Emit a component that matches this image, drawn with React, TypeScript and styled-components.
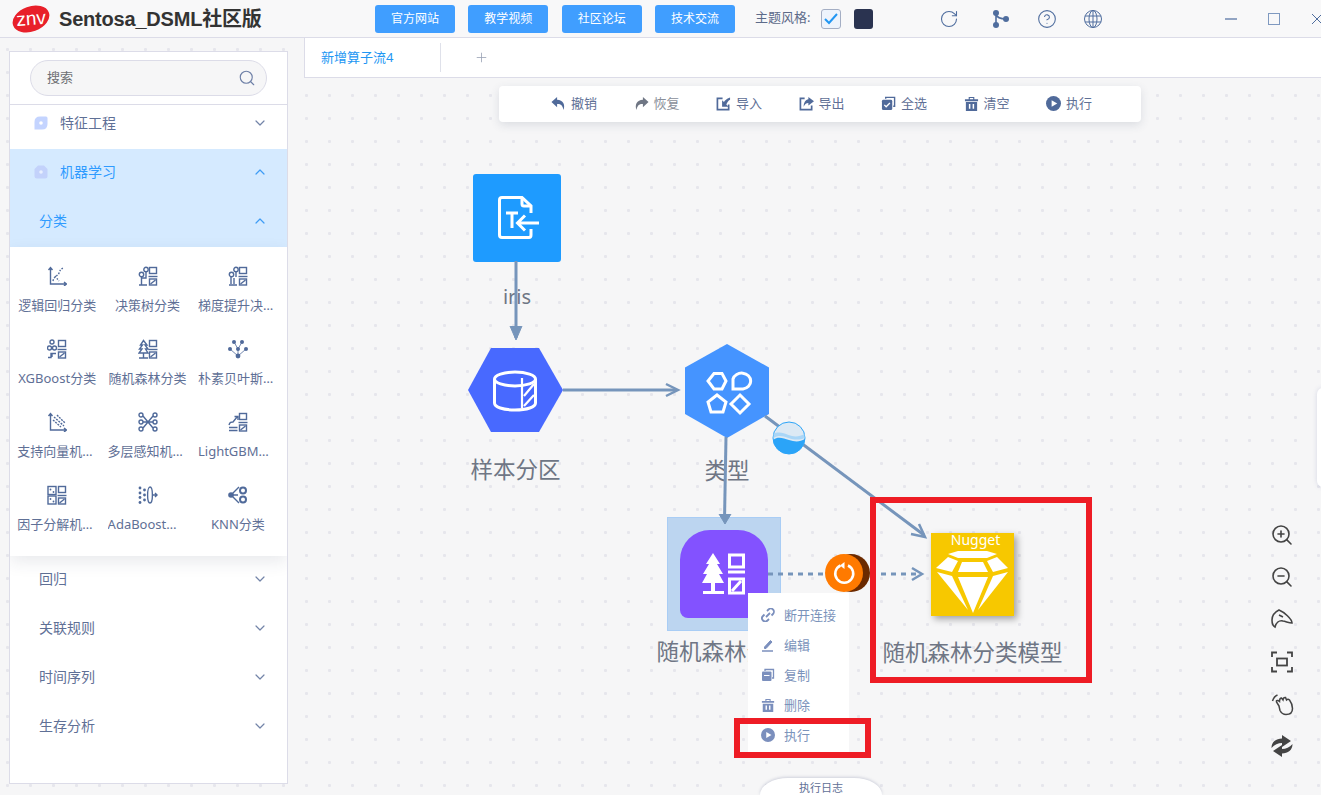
import React from "react";
import styled, { createGlobalStyle } from "styled-components";
import { ChevronDown, ChevronUp, RotateCw, CircleHelp, Search, ZoomIn, ZoomOut, Plus } from "lucide-react";

const Global = createGlobalStyle`
  html, body { margin: 0; padding: 0; height: 100%; overflow: hidden; }
  body { font-family: "Noto Sans", "Noto Sans CJK SC", sans-serif; }
  * { box-sizing: border-box; }
`;

const Page = styled.div`
  width: 1321px; height: 795px; display: flex; flex-direction: column; overflow: hidden; background: #f6f6f7;
`;
const Header = styled.header`
  height: 38px; flex: none; display: flex; align-items: center; background: #f8f8f9; border-bottom: 1px solid #dcdce8; padding-left: 12px; overflow: hidden;
`;
const Logo = styled.svg`width: 38px; height: 30px; flex: none;`;
const Title = styled.div`
  margin-left: 9px; width: 316px; flex: none; font: bold 20px "Liberation Sans", "Noto Sans CJK SC", sans-serif; letter-spacing: -0.2px; color: #333; white-space: nowrap; padding-bottom: 3px;
`;
const LinkGroup = styled.div`display: flex; gap: 13.33px; flex: none;`;
const LinkButton = styled.button`
  width: 80px; height: 28px; border: 0; border-radius: 3px; background: #409eff; color: #fff; font: 12px "Noto Sans CJK SC", sans-serif; padding: 0 0 3px;
`;
const ThemeLabel = styled.span`
  margin-left: 20px; width: 66px; flex: none; font-size: 13px; color: #5d6b8a; white-space: nowrap; padding-bottom: 5px;
`;
const ThemeCheck = styled.div`
  width: 20px; height: 20px; border: 1px solid #a4aec4; border-radius: 3px; background: #edf3fc; display: flex; align-items: center; justify-content: center; flex: none;
`;
const ThemeDark = styled.div`
  width: 19px; height: 20px; margin-left: 13px; border-radius: 3px; background: #2a3350; flex: none;
`;
const HeaderIcons = styled.div`
  margin-left: 66px; display: flex; align-items: center; color: #4f6d9e; flex: none;
  svg:first-child { margin-right: 32px; }
  svg + svg + svg, svg + svg + svg + svg { margin-left: 26px; }
`;
const WindowButtons = styled.div`
  margin-left: 122px; display: flex; align-items: center; gap: 31px; flex: none;
`;
const Body = styled.main`
  flex: 1; min-height: 0; display: flex; position: relative;
  background-image: radial-gradient(circle, #e6e6ec 1.3px, transparent 1.7px);
  background-size: 23px 23px; background-position: -4px 0;
`;
const Sidebar = styled.aside`
  width: 279px; flex: none; margin: 13px 16px 11px 9px; background: #fff; border: 1px solid #dcdce8; display: flex; flex-direction: column; overflow: hidden;
`;
const SearchRow = styled.div`
  height: 53px; flex: none; padding: 8px 20px 0; border-bottom: 1px solid #dcdce8;
`;
const SearchBox = styled.div`
  height: 36px; border-radius: 18px; background: #f6f6f7; border: 1px solid #dcdce8; display: flex; align-items: center; justify-content: space-between; padding: 0 10px 3px 16px; font-size: 13px; color: #6f7074;
  svg { margin-top: 3px; }
`;
const MenuRow = styled.div<{ $active?: boolean; $sub?: boolean; $first?: boolean }>`
  height: ${p => (p.$first ? 44 : 49)}px; flex: none; display: flex; align-items: center;
  padding: 0 19px ${p => (p.$first ? 10 : 5)}px ${p => (p.$sub ? 29 : 24)}px;
  background: ${p => (p.$active ? "#d5eaff" : "#fff")};
  color: ${p => (p.$active ? "#2f9bff" : "#5f7096")};
  font-size: 14px;
  svg.chev { margin-left: auto; margin-top: 2px; color: ${p => (p.$active ? "#3f9cf5" : "#7384a8")}; }
`;
const MenuIcon = styled.svg`width: 14px; height: 14px; margin-right: 12px; margin-top: 2px; flex: none;`;
const AlgoGrid = styled.div`
  flex: none; height: 309px; display: grid; grid-template-columns: repeat(3, 90.4px); grid-auto-rows: 73px; padding-left: 2px; background: #fff;
  box-shadow: 0 6px 16px rgba(40, 50, 80, 0.1); position: relative; z-index: 1;
`;
const AlgoItem = styled.div`
  display: flex; flex-direction: column; align-items: center; padding-top: 19px;
  svg { width: 20px; height: 20px; color: #506a9a; flex: none; }
`;
const AlgoLabel = styled.div`
  margin-top: 10px; width: 80px; height: 18px; line-height: 18px; font-size: 13px; color: #5f7096; text-align: center; white-space: nowrap; overflow: hidden; text-overflow: ellipsis;
`;
const Workspace = styled.section`flex: 1; min-width: 0; display: flex; flex-direction: column;`;
const Tabs = styled.div`
  height: 40px; flex: none; background: #fff; border-left: 1px solid #dcdce8; border-bottom: 1px solid #dcdce8; display: flex; align-items: center;
`;
const Tab = styled.div`
  width: 136px; height: 29px; margin-top: -1px; padding: 0 0 2px 16px; border-right: 1px solid #dfe1ea; display: flex; align-items: center; font-size: 13px; color: #2196f3;
`;
const AddTab = styled.div`margin-left: 33px; display: flex; color: #9aa3b5;`;
const Canvas = styled.div`flex: 1; min-height: 0; position: relative;`;
const Toolbar = styled.div`
  position: absolute; left: 195px; top: 8px; width: 642px; height: 36px; background: #fff; border-radius: 4px; box-shadow: 0 3px 10px rgba(60, 70, 100, 0.14); display: flex; align-items: center; padding: 0 0 2px 52px; gap: 36.5px; z-index: 3;
`;
const ToolItem = styled.div<{ $muted?: boolean }>`
  display: flex; align-items: center; gap: 5px; font-size: 13px; color: ${p => (p.$muted ? "#8a8f9a" : "#5f7096")};
  svg { width: 15px; height: 15px; flex: none; color: ${p => (p.$muted ? "#6f7684" : "#506a9a")}; }
  span { padding-bottom: 2px; }
`;
const Edges = styled.svg`position: absolute; left: 0; top: 0; width: 1017px; height: 717px; z-index: 1; pointer-events: none;`;
const Node = styled.div<{ $x: number; $y: number; $w: number }>`
  position: absolute; left: ${p => p.$x - 304}px; top: ${p => p.$y - 78}px; width: ${p => p.$w}px; display: flex; flex-direction: column; align-items: center;
`;
const NodeLabel = styled.div<{ $gap: number }>`
  margin-top: ${p => p.$gap}px; height: 30px; line-height: 30px; font-size: 22.5px; color: #6f7685; white-space: nowrap;
`;
const IrisLabel = styled(NodeLabel)`font-size: 20px;`;
const SquareShape = styled.div`
  width: 88px; height: 88px; background: #1e9bff; border-radius: 3px; display: flex; align-items: center; justify-content: center;
  svg { margin-left: 4px; }
`;
const HexShape = styled.svg`display: block; flex: none;`;
const Selection = styled.div`
  width: 114px; height: 114px; background: #bcd5f0; border: 1px solid #a9cdf5; display: flex; align-items: center; justify-content: center;
`;
const PurpleShape = styled.div`
  width: 88px; height: 88px; background: #8352ff; border-radius: 30px 30px 8px 8px; display: flex; align-items: center; justify-content: center;
`;
const NuggetShape = styled.div`
  width: 83px; height: 83px; background: #f7c800; box-shadow: 3px 3px 7px rgba(0, 0, 0, 0.35); position: relative; display: flex; flex-direction: column; align-items: center;
`;
const NuggetText = styled.div`
  height: 15px; line-height: 14px; font-size: 14px; color: #fff; margin-bottom: 2px; margin-left: 6px;
`;
const RunBadge = styled.div`
  position: absolute; left: ${825 - 304}px; top: ${554 - 78}px; width: 38px; height: 38px; border-radius: 50%; background: #ff7a00; z-index: 2; display: flex; align-items: center; justify-content: center; box-shadow: 7px 0 0 #6b2a00;
`;
const ContextMenu = styled.div`
  position: absolute; left: ${748 - 304}px; top: ${593 - 78}px; width: 101px; height: 159px; background: #fff; padding: 7px 0 0 13px; z-index: 4; display: flex; flex-direction: column;
`;
const ContextItem = styled.div`
  height: 30px; display: flex; align-items: center; gap: 9px; font-size: 13px; color: #7b93bb; white-space: nowrap;
  svg { width: 14px; height: 14px; color: #7b8fbd; flex: none; }
  span { padding-bottom: 2px; }
`;
const RedBox = styled.div<{ $x: number; $y: number; $w: number; $h: number }>`
  position: absolute; left: ${p => p.$x - 304}px; top: ${p => p.$y - 78}px; width: ${p => p.$w}px; height: ${p => p.$h}px; border: 6px solid #ee1c25; z-index: 5;
`;
const LogTab = styled.div`
  position: absolute; left: ${760 - 304}px; top: ${778 - 78}px; width: 122px; height: 17px; background: #fff; border-radius: 28px 28px 0 0 / 17px 17px 0 0; box-shadow: 0 -1px 3px rgba(90, 100, 140, 0.25); text-align: center; font-size: 11px; line-height: 20px; color: #5f7096; z-index: 3;
`;
const SideHandle = styled.div`
  position: absolute; right: -8px; top: ${388 - 78}px; width: 12px; height: 99px; background: #fff; border-radius: 6px; box-shadow: 0 0 5px rgba(90, 100, 160, 0.2);
`;
const ZoomTools = styled.div`
  position: absolute; left: ${1270 - 304}px; top: ${523 - 78}px; width: 24px; display: flex; flex-direction: column; gap: 18.2px; color: #444; z-index: 2;
  svg { width: 24px; height: 24px; display: block; }
`;

const S = { fill: "none", stroke: "currentColor", strokeWidth: 1.4 } as const;
const ListPart = () => (
  <g {...S}>
    <rect x="11.5" y="1.5" width="7" height="6" />
    <path d="M10.5 10.5h9" />
    <rect x="11.5" y="13" width="7" height="6" />
    <path d="M12.5 18l5-4" />
  </g>
);
const Base = ({ children }: { children: React.ReactNode }) => <svg viewBox="0 0 20 20">{children}</svg>;
const Dot = ({ x, y, r = 1.8 }: { x: number; y: number; r?: number }) => <circle cx={x} cy={y} r={r} fill="currentColor" />;

const algoIcons: React.ReactNode[] = [
  <Base><g {...S}><path d="M3.5 1.5v16.5H19M1.5 4l2-2.5 2 2.5M17 16l2.5 2-2.5 2" /><path d="M6 15c1-5 5-5 6-8s2-4 4-5" strokeDasharray="1.6 1.4" /><path d="M8 10l4 5" strokeDasharray="1.5 1.5" /></g></Base>,
  <Base><ListPart /><g {...S}><circle cx="3.5" cy="8.5" r="2.2" /><circle cx="8" cy="3.5" r="2.2" /><path d="M3.5 11v8M1 19h8M8 6v6H3.5" /></g></Base>,
  <Base><ListPart /><g {...S}><circle cx="3.5" cy="8.5" r="2.2" /><circle cx="8" cy="3.5" r="2.2" /><path d="M3 11v7M6 12v6M1 19h8M8 6v5" /></g></Base>,
  <Base><ListPart /><g {...S}><circle cx="5" cy="3" r="2" /><circle cx="2.5" cy="9" r="2" /><circle cx="7.5" cy="9" r="2" /><path d="M1 18.5h3v-4h5M5 14v4" /></g></Base>,
  <Base><ListPart /><g {...S}><path d="M5.5 1.5L2.5 6h2l-3 4h2.5L1 14h9l-2.5-4H10L7 6h2zM5.5 14v5M1 19h9" /></g></Base>,
  <Base><Dot x={6} y={3} r={2} /><Dot x={14} y={3} r={2} /><Dot x={2} y={10} r={2} /><Dot x={10} y={10} r={2} /><Dot x={18} y={10} r={2} /><Dot x={10} y={17} r={2.4} /><path {...S} d="M6 3l4 7 4-7M2 10l8 7 8-7M10 10v7" strokeWidth={0.8} /></Base>,
  <Base><g {...S}><path d="M3.5 1.5v16.5H19M1.5 4l2-2.5 2 2.5M17 16l2.5 2-2.5 2" /><path d="M7 5l10 9M10 3l8 8M6 8l8 7" strokeDasharray="2 1" /></g></Base>,
  <Base><g {...S}><circle cx="3" cy="3" r="2" /><circle cx="3" cy="10" r="2" /><circle cx="3" cy="17" r="2" /><circle cx="17" cy="3" r="2" /><circle cx="17" cy="10" r="2" /><circle cx="17" cy="17" r="2" /><path d="M5 4l10 12M5 16L15 4M5 10l5 0 5 0" /></g></Base>,
  <Base><ListPart /><g {...S}><path d="M1 13c1-3 2-3 4-3l4-5M6.5 4.5H10V8M1 15.5h8.5M1 18.5h8.5" /></g></Base>,
  <Base><ListPart /><g {...S}><rect x="1" y="1.5" width="8" height="8" /><rect x="1" y="11" width="8" height="8" /></g><Dot x={3.5} y={4.5} r={0.9} /><Dot x={6.5} y={7} r={0.9} /><Dot x={3.5} y={14} r={0.9} /><Dot x={6.5} y={16.5} r={0.9} /></Base>,
  <Base><Dot x={2} y={3} r={1.4} /><Dot x={2} y={8} r={1.4} /><Dot x={2} y={12.5} r={1.4} /><Dot x={2} y={17.5} r={1.4} /><Dot x={6.5} y={5} r={1.4} /><Dot x={6.5} y={10} r={1.4} /><Dot x={6.5} y={15} r={1.4} /><g {...S}><ellipse cx="12" cy="10" rx="2.4" ry="8" /><path d="M14.5 10H19M17 8l2 2-2 2" /></g></Base>,
  <Base><Dot x={3} y={10} r={2.8} /><path {...S} d="M3 10L11 2M3 10l8 8M3 10h7" /><g {...S} strokeWidth={2}><circle cx="15" cy="5.5" r="3" /><circle cx="15" cy="14.5" r="3" /></g></Base>,
];
const algos = ["逻辑回归分类", "决策树分类", "梯度提升决策树分类", "XGBoost分类", "随机森林分类", "朴素贝叶斯分类", "支持向量机分类", "多层感知机分类", "LightGBM分类", "因子分解机分类", "AdaBoost分类", "KNN分类"];

const tools: { label: string; muted?: boolean; icon: React.ReactNode }[] = [
  { label: "撤销", icon: <svg viewBox="0 0 16 16"><path fill="currentColor" d="M6.5 1L0.5 6.5 6.5 12V8.5c3.5-.3 6 1.2 6.8 6.5C15.5 9.5 13 4.2 6.5 4z" /></svg> },
  { label: "恢复", muted: true, icon: <svg viewBox="0 0 16 16"><path fill="currentColor" d="M9.5 1l6 5.5-6 5.500V8.500c-3.500-.3-6 1.200-6.800 6.500C.5 9.500 3 4.200 9.500 4z" /></svg> },
  { label: "导入", icon: <svg viewBox="0 0 16 16"><path fill="none" stroke="currentColor" strokeWidth="1.800" d="M7 2.500H1.500v12h12V9" /><path fill="currentColor" d="M15 1.500C11 3 9.500 4.500 8.500 6.500L6.500 4.500v7h7l-2.500-2.500C12 7 13 5 15 4z" /></svg> },
  { label: "导出", icon: <svg viewBox="0 0 16 16"><path fill="none" stroke="currentColor" strokeWidth="1.800" d="M6 2.500H1.500v12h12V10" /><path fill="currentColor" d="M10 1l6 4.500-6 4.500V7.500C7.500 7.500 6 9 5 11.500 5 7 7 4 10 3.500z" /></svg> },
  { label: "全选", icon: <svg viewBox="0 0 16 16"><path fill="none" stroke="currentColor" strokeWidth="1.500" d="M5 3V1.500h9.500V11H13" /><rect x="1" y="4" width="11" height="11" rx="1.500" fill="currentColor" /><path d="M3.500 9.500l2 2 4-4" fill="none" stroke="#fff" strokeWidth="1.400" /></svg> },
  { label: "清空", icon: <svg viewBox="0 0 16 16"><path fill="currentColor" d="M1 3.500h14V5.500H1zM5 3.500V1h6v2.500H9.800V2.200H6.200v1.300zM2 6.500h12V16H2z" /><path d="M6 8.500v5M10 8.500v5" stroke="#fff" strokeWidth="1.600" /></svg> },
  { label: "执行", icon: <svg viewBox="0 0 16 16"><circle cx="8" cy="8" r="8" fill="currentColor" /><path d="M6 4.500l6 3.500-6 3.500z" fill="#fff" /></svg> },
];

const menuItems: { label: string; icon: React.ReactNode }[] = [
  { label: "断开连接", icon: <svg viewBox="0 0 14 14" fill="none" stroke="currentColor" strokeWidth="1.800"><path d="M6 3l1.500-1.500a3 3 0 0 1 4.500 4.500L10.500 7.500M8 11l-1.500 1.500A3 3 0 0 1 2 8L3.500 6.500M5 9l4-4" /></svg> },
  { label: "编辑", icon: <svg viewBox="0 0 14 14" fill="none" stroke="currentColor"><path d="M3.500 9l6-6.500 1.500 1.500-6 6.500H3.500z" fill="currentColor" /><path d="M1 13h11" strokeWidth="1.500" /></svg> },
  { label: "复制", icon: <svg viewBox="0 0 14 14"><path fill="none" stroke="currentColor" strokeWidth="1.300" d="M4 3V1.500h8.500V10H11" /><rect x="1" y="3.500" width="9.500" height="9.500" rx="1" fill="currentColor" /><path d="M3 7.500h5.500" stroke="#fff" /></svg> },
  { label: "删除", icon: <svg viewBox="0 0 16 16"><path fill="currentColor" d="M1 3.500h14V5.500H1zM5 3.500V1h6v2.500H9.800V2.200H6.200v1.300zM2 6.500h12V16H2z" /><path d="M6 8.500v5M10 8.500v5" stroke="#fff" strokeWidth="1.600" /></svg> },
  { label: "执行", icon: <svg viewBox="0 0 16 16"><circle cx="8" cy="8" r="8" fill="currentColor" /><path d="M6 4.500l6 3.500-6 3.500z" fill="#fff" /></svg> },
];

const Chev = ({ up }: { up?: boolean }) => (up ? <ChevronUp className="chev" size={16} strokeWidth={1.800} /> : <ChevronDown className="chev" size={16} strokeWidth={1.800} />);

const W = { fill: "none", stroke: "#fff", strokeWidth: 3 } as const;

export default function App() {
  return (
    <>
      <Global />
      <Page>
        <Header>
          <Logo viewBox="0 0 38 30">
            <ellipse cx="19" cy="15" rx="19" ry="12.500" transform="rotate(-20 19 15)" fill="#e8202a" />
            <text x="19" y="21" textAnchor="middle" fontFamily="Liberation Sans" fontSize="19" fill="#fff" transform="rotate(-4 19 15)">znv</text>
          </Logo>
          <Title>Sentosa_DSML社区版</Title>
          <LinkGroup>
            <LinkButton>官方网站</LinkButton>
            <LinkButton>教学视频</LinkButton>
            <LinkButton>社区论坛</LinkButton>
            <LinkButton>技术交流</LinkButton>
          </LinkGroup>
          <ThemeLabel>主题风格:</ThemeLabel>
          <ThemeCheck>
            <svg width="14" height="12" viewBox="0 0 14 12"><path d="M1 6l4 4 8-9" fill="none" stroke="#2196f3" strokeWidth="2" /></svg>
          </ThemeCheck>
          <ThemeDark />
          <HeaderIcons>
            <RotateCw size={20} strokeWidth={1.300} />
            <svg width="20" height="20" viewBox="0 0 20 20"><circle cx="5" cy="4" r="3" fill="currentColor" /><circle cx="5" cy="16" r="3" fill="currentColor" /><circle cx="15" cy="10" r="3" fill="currentColor" /><path d="M5 4v12M5 5c1 4 4 5 10 5" fill="none" stroke="currentColor" strokeWidth="1.600" /></svg>
            <CircleHelp size={20} strokeWidth={1.300} />
            <svg width="20" height="20" viewBox="0 0 20 20" fill="none" stroke="currentColor" strokeWidth="1"><circle cx="10" cy="10" r="8.500" /><ellipse cx="10" cy="10" rx="4" ry="8.500" /><path d="M10 1.500v17M2 7h16M2 13h16" /></svg>
          </HeaderIcons>
          <WindowButtons>
            <svg width="12" height="12" viewBox="0 0 12 12"><path d="M0 6h12" stroke="#4f6d9e" strokeWidth="1.200" /></svg>
            <svg width="12" height="12" viewBox="0 0 12 12"><rect x=".5" y=".5" width="11" height="11" fill="none" stroke="#7f99c0" /></svg>
            <svg width="12" height="12" viewBox="0 0 12 12"><path d="M1 1l10 10M11 1L1 11" stroke="#4f6d9e" strokeWidth="1" /></svg>
          </WindowButtons>
        </Header>
        <Body>
          <Sidebar>
            <SearchRow>
              <SearchBox>搜索<Search size={18} strokeWidth={1.500} color="#6d7fa6" /></SearchBox>
            </SearchRow>
            <MenuRow $first>
              <MenuIcon viewBox="0 0 14 14"><path d="M6 0.500H12Q13.500 .5 13.500 2V8Q13.500 13.500 8 13.500H0.500V6Q0.500 .5 6 .5z" fill="#c4d4ff" /><circle cx="7" cy="7" r="1.800" fill="#fff" /></MenuIcon>
              特征工程<Chev />
            </MenuRow>
            <MenuRow $active>
              <MenuIcon viewBox="0 0 14 14"><path d="M4 0.500H10L13.500 4V11Q13.500 13.500 11 13.500H3Q.5 13.500 .5 11V4z" fill="#c3d2fb" /><circle cx="7" cy="7" r="1.800" fill="#e8f0ff" /></MenuIcon>
              机器学习<Chev up />
            </MenuRow>
            <MenuRow $active $sub>分类<Chev up /></MenuRow>
            <AlgoGrid>
              {algos.map((a, i) => (
                <AlgoItem key={a}>
                  {algoIcons[i]}
                  <AlgoLabel>{a}</AlgoLabel>
                </AlgoItem>
              ))}
            </AlgoGrid>
            {["回归", "关联规则", "时间序列", "生存分析"].map(t => (
              <MenuRow $sub key={t}>{t}<Chev /></MenuRow>
            ))}
          </Sidebar>
          <Workspace>
            <Tabs>
              <Tab>新增算子流4</Tab>
              <AddTab><Plus size={15} strokeWidth={1.300} /></AddTab>
            </Tabs>
            <Canvas>
              <Toolbar>
                {tools.map(t => (
                  <ToolItem key={t.label} $muted={t.muted}>{t.icon}<span>{t.label}</span></ToolItem>
                ))}
              </Toolbar>

              <Node $x={473} $y={173.500} $w={88}>
                <SquareShape>
                  <svg width="42" height="44" viewBox="0 0 42 44">
                    <path {...W} d="M33 17V10L24 1.500H4Q1.500 1.500 1.500 4V39Q1.500 41.500 4 41.500H31Q33 41.500 33 39V33" />
                    <path {...W} d="M24 1.500V8Q24 10 26 10H33M8 17H20M14 17V32M41 27H20M27 19.500L19.500 27L27 34.500" />
                  </svg>
                </SquareShape>
                <IrisLabel $gap={20}>iris</IrisLabel>
              </Node>

              <Node $x={468} $y={348} $w={95}>
                <HexShape width="95" height="84" viewBox="0 0 95 84">
                  <polygon points="0,42 23,0 71,0 95,42 71,84 23,84" fill="#4869ff" />
                  <g transform="translate(25,22)">
                    <ellipse {...W} cx="22" cy="9" rx="20.500" ry="7" />
                    <path {...W} d="M1.500 9V33C1.500 37 10 40 22 40S42.500 37 42.500 33V9" />
                    <path {...W} strokeWidth={2.200} d="M29 8V38M31 26L41 14M31 36L41 25" />
                  </g>
                </HexShape>
                <NodeLabel $gap={23}>样本分区</NodeLabel>
              </Node>

              <Node $x={685} $y={343.500} $w={84}>
                <HexShape width="84" height="94" viewBox="0 0 84 94">
                  <polygon points="42,0 84,23.500 84,70 42,94 0,70 0,23.500" fill="#4594ff" />
                  <g {...W}>
                    <polygon points="29,29.500 37,29.500 41,37 37,45 29,45 23,37" />
                    <path d="M48 45V35A9 8 0 1 1 58 45z" />
                    <polygon points="32,51 41,58 38,68 26,68 23,58" />
                    <polygon points="55,51 64,60 55,69 46,60" />
                  </g>
                </HexShape>
                <NodeLabel $gap={18}>类型</NodeLabel>
              </Node>

              <Node $x={667} $y={517} $w={114}>
                <Selection>
                  <PurpleShape>
                    <svg width="44" height="44" viewBox="0 0 44 44">
                      <path fill="#fff" d="M11 1L4 12H7L1 22H5L0 31H9V39H1V42H22V39H13V31H22L17 22H21L15 12H18z" />
                      <rect x="27.500" y="3" width="14" height="12" {...W} />
                      <path d="M26 20H43" {...W} />
                      <rect x="27.500" y="27" width="14" height="14" {...W} />
                      <path d="M30 39L39 29" {...W} />
                    </svg>
                  </PurpleShape>
                </Selection>
                <NodeLabel $gap={6}>随机森林分类</NodeLabel>
              </Node>

              <Node $x={883.500} $y={533} $w={178}>
                <NuggetShape>
                  <NuggetText>Nugget</NuggetText>
                  <svg width="75" height="65" viewBox="0 0 75 65" fill="#fff">
                    <polygon points="13,4 23,1 52,1 62,4 52,8 23,8" />
                    <polygon points="1,18 13,7 23,11 17,22" />
                    <polygon points="73,18 62,7 52,11 58,22" />
                    <polygon points="27,12 48,12 53,22 23,22" />
                    <polygon points="23,27 53,27 38,63" />
                    <polygon points="2,22 17,26 33,60" />
                    <polygon points="73,22 58,26 43,60" />
                  </svg>
                </NuggetShape>
                <NodeLabel $gap={22}>随机森林分类模型</NodeLabel>
              </Node>

              <Edges viewBox="304 78 1017 717">
                <g fill="none" stroke="#7695bb" strokeWidth="3">
                  <path d="M516 261V338" />
                  <path d="M510 326L516 340L522 326" fill="#7695bb" strokeWidth="1" />
                  <path d="M563 390H676" />
                  <path d="M666 384L678 390L666 396" strokeWidth="2.500" />
                  <path d="M726 437L724.500 520" />
                  <path d="M719 514L725 524L731 514" fill="#7695bb" strokeWidth="1" />
                  <path d="M765 416L924 535" />
                  <path d="M911 534L925 537L919 524" strokeWidth="2.500" />
                  <path d="M768 574H826M871 574H920" strokeDasharray="5 5" />
                  <path d="M912 568L922 574L912 580" strokeWidth="2.500" />
                </g>
                <circle cx="789" cy="438" r="16" fill="#dce9f4" stroke="#2ba4f8" strokeWidth="1" />
                <path d="M773 440c5-4 10-2 16 0s11 2 16-1c-1 9-8 15-16 15s-15-6-16-14z" fill="#2ba4f8" />
                <path d="M773.500 434c5-3 10-1 15 1s11 2 16-1v4c-5 2-10 2-16 0s-10-3-15 0z" fill="#a9d6f7" />
              </Edges>

              <RunBadge>
                <svg width="24" height="24" viewBox="0 0 24 24" fill="none" stroke="#fff" strokeWidth="2.500"><path d="M8.500 4.500A9 9 0 1 0 16 4.500" /><path d="M12.500 1L8 4.500L12.500 8" fill="#fff" strokeWidth="0" /></svg>
              </RunBadge>

              <ContextMenu>
                {menuItems.map(m => (
                  <ContextItem key={m.label}>{m.icon}<span>{m.label}</span></ContextItem>
                ))}
              </ContextMenu>

              <RedBox $x={870} $y={497} $w={222} $h={186} />
              <RedBox $x={734} $y={718} $w={137} $h={40} />

              <LogTab>执行日志</LogTab>
              <SideHandle />

              <ZoomTools>
                <ZoomIn strokeWidth={1.600} />
                <ZoomOut strokeWidth={1.600} />
                <svg viewBox="0 0 24 24" fill="none" stroke="currentColor" strokeWidth="1.600"><path d="M9 3C5 5 2 9 2 13c0 3 1 6 3 7 1-4 4-7 8-6 3 .5 6 2 9 2 0-4-8-11-13-13zM9 8l4 2" /></svg>
                <svg viewBox="0 0 24 24" fill="none" stroke="currentColor" strokeWidth="1.800"><path d="M2 7V2.500H7M17 2.500H22V7M22 17V21.500H17M7 21.500H2V17" /><rect x="7" y="8.500" width="10" height="7" /></svg>
                <svg viewBox="0 0 24 24" fill="none" stroke="currentColor" strokeWidth="1.500"><path d="M2.500 9C3.500 6 5 4 7.500 3" /><path d="M9 14L6.500 10Q6 8 8 8.500L9.500 9.500Q9.500 6 11.500 6L13 8Q13.500 5 15.500 5.500L16.500 8Q18 6.500 19.500 8Q22.500 12 22.500 16.500Q22.500 22.500 16 22.500Q12 22.500 10 18.500z" /></svg>
                <svg viewBox="0 0 24 24" fill="currentColor"><path d="M1.500 14C1.500 8 6 4.500 12 4.500V1L21 7L12 13V9C8 9 4.500 10.500 1.500 14z" /><path d="M22.500 10C22.500 16 18 19.500 12 19.500V23L3 17L12 11V15C16 15 19.500 13.500 22.500 10z" /></svg>
              </ZoomTools>
            </Canvas>
          </Workspace>
        </Body>
      </Page>
    </>
  );
}
